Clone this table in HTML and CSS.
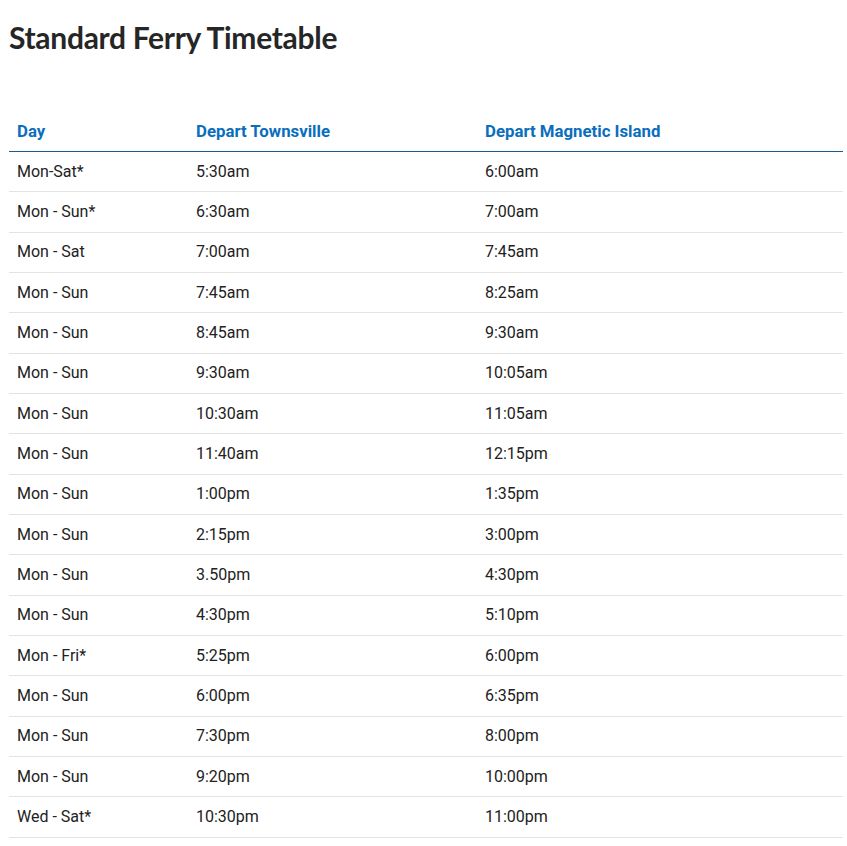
FILE: index.html
```html
<!DOCTYPE html>
<html>
<head>
<meta charset="utf-8">
<link rel="stylesheet" href="styles.css">
</head>
<body>
<h1 class="title">Standard Ferry Timetable</h1>
<table class="timetable">
<colgroup><col class="c1"><col class="c2"><col class="c3"></colgroup>
<thead>
<tr><th>Day</th><th>Depart Townsville</th><th>Depart Magnetic Island</th></tr>
</thead>
<tbody>
<tr><td>Mon-Sat*</td><td>5:30am</td><td>6:00am</td></tr>
<tr><td>Mon - Sun*</td><td>6:30am</td><td>7:00am</td></tr>
<tr><td>Mon - Sat</td><td>7:00am</td><td>7:45am</td></tr>
<tr><td>Mon - Sun</td><td>7:45am</td><td>8:25am</td></tr>
<tr><td>Mon - Sun</td><td>8:45am</td><td>9:30am</td></tr>
<tr><td>Mon - Sun</td><td>9:30am</td><td>10:05am</td></tr>
<tr><td>Mon - Sun</td><td>10:30am</td><td>11:05am</td></tr>
<tr><td>Mon - Sun</td><td>11:40am</td><td>12:15pm</td></tr>
<tr><td>Mon - Sun</td><td>1:00pm</td><td>1:35pm</td></tr>
<tr><td>Mon - Sun</td><td>2:15pm</td><td>3:00pm</td></tr>
<tr><td>Mon - Sun</td><td>3.50pm</td><td>4:30pm</td></tr>
<tr><td>Mon - Sun</td><td>4:30pm</td><td>5:10pm</td></tr>
<tr><td>Mon - Fri*</td><td>5:25pm</td><td>6:00pm</td></tr>
<tr><td>Mon - Sun</td><td>6:00pm</td><td>6:35pm</td></tr>
<tr><td>Mon - Sun</td><td>7:30pm</td><td>8:00pm</td></tr>
<tr><td>Mon - Sun</td><td>9:20pm</td><td>10:00pm</td></tr>
<tr><td>Wed - Sat*</td><td>10:30pm</td><td>11:00pm</td></tr>
</tbody>
</table>
</body>
</html>
```
FILE: styles.css
```css
html, body {
  margin: 0;
  padding: 0;
  background: #fff;
}
body {
  padding: 0 4px 0 9px;
  font-family: Roboto, "Liberation Sans", sans-serif;
  color: #222;
}
.title {
  margin: 0;
  padding-top: 17px;
  font-family: Lato, "Open Sans", sans-serif;
  font-weight: 700;
  font-size: 30px;
  line-height: 40px;
  letter-spacing: -0.3px;
  color: #262626;
}
.timetable {
  margin-top: 54px;
  width: 834px;
  border-collapse: collapse;
  table-layout: fixed;
  font-size: 16px;
}
.c1 { width: 179px; }
.c2 { width: 289px; }
.c3 { width: 366px; }
.timetable th {
  text-align: left;
  font-weight: 700;
  font-size: 16.8px;
  color: #0a6ebd;
  line-height: 24px;
  padding: 8px 8px 8px 8px;
  border-bottom: 1px solid #1d5a8f;
}
.timetable td {
  line-height: 24px;
  padding: 7.7px 8px 7.65px 8px;
  border-bottom: 1px solid #e3e3e3;
}
```
